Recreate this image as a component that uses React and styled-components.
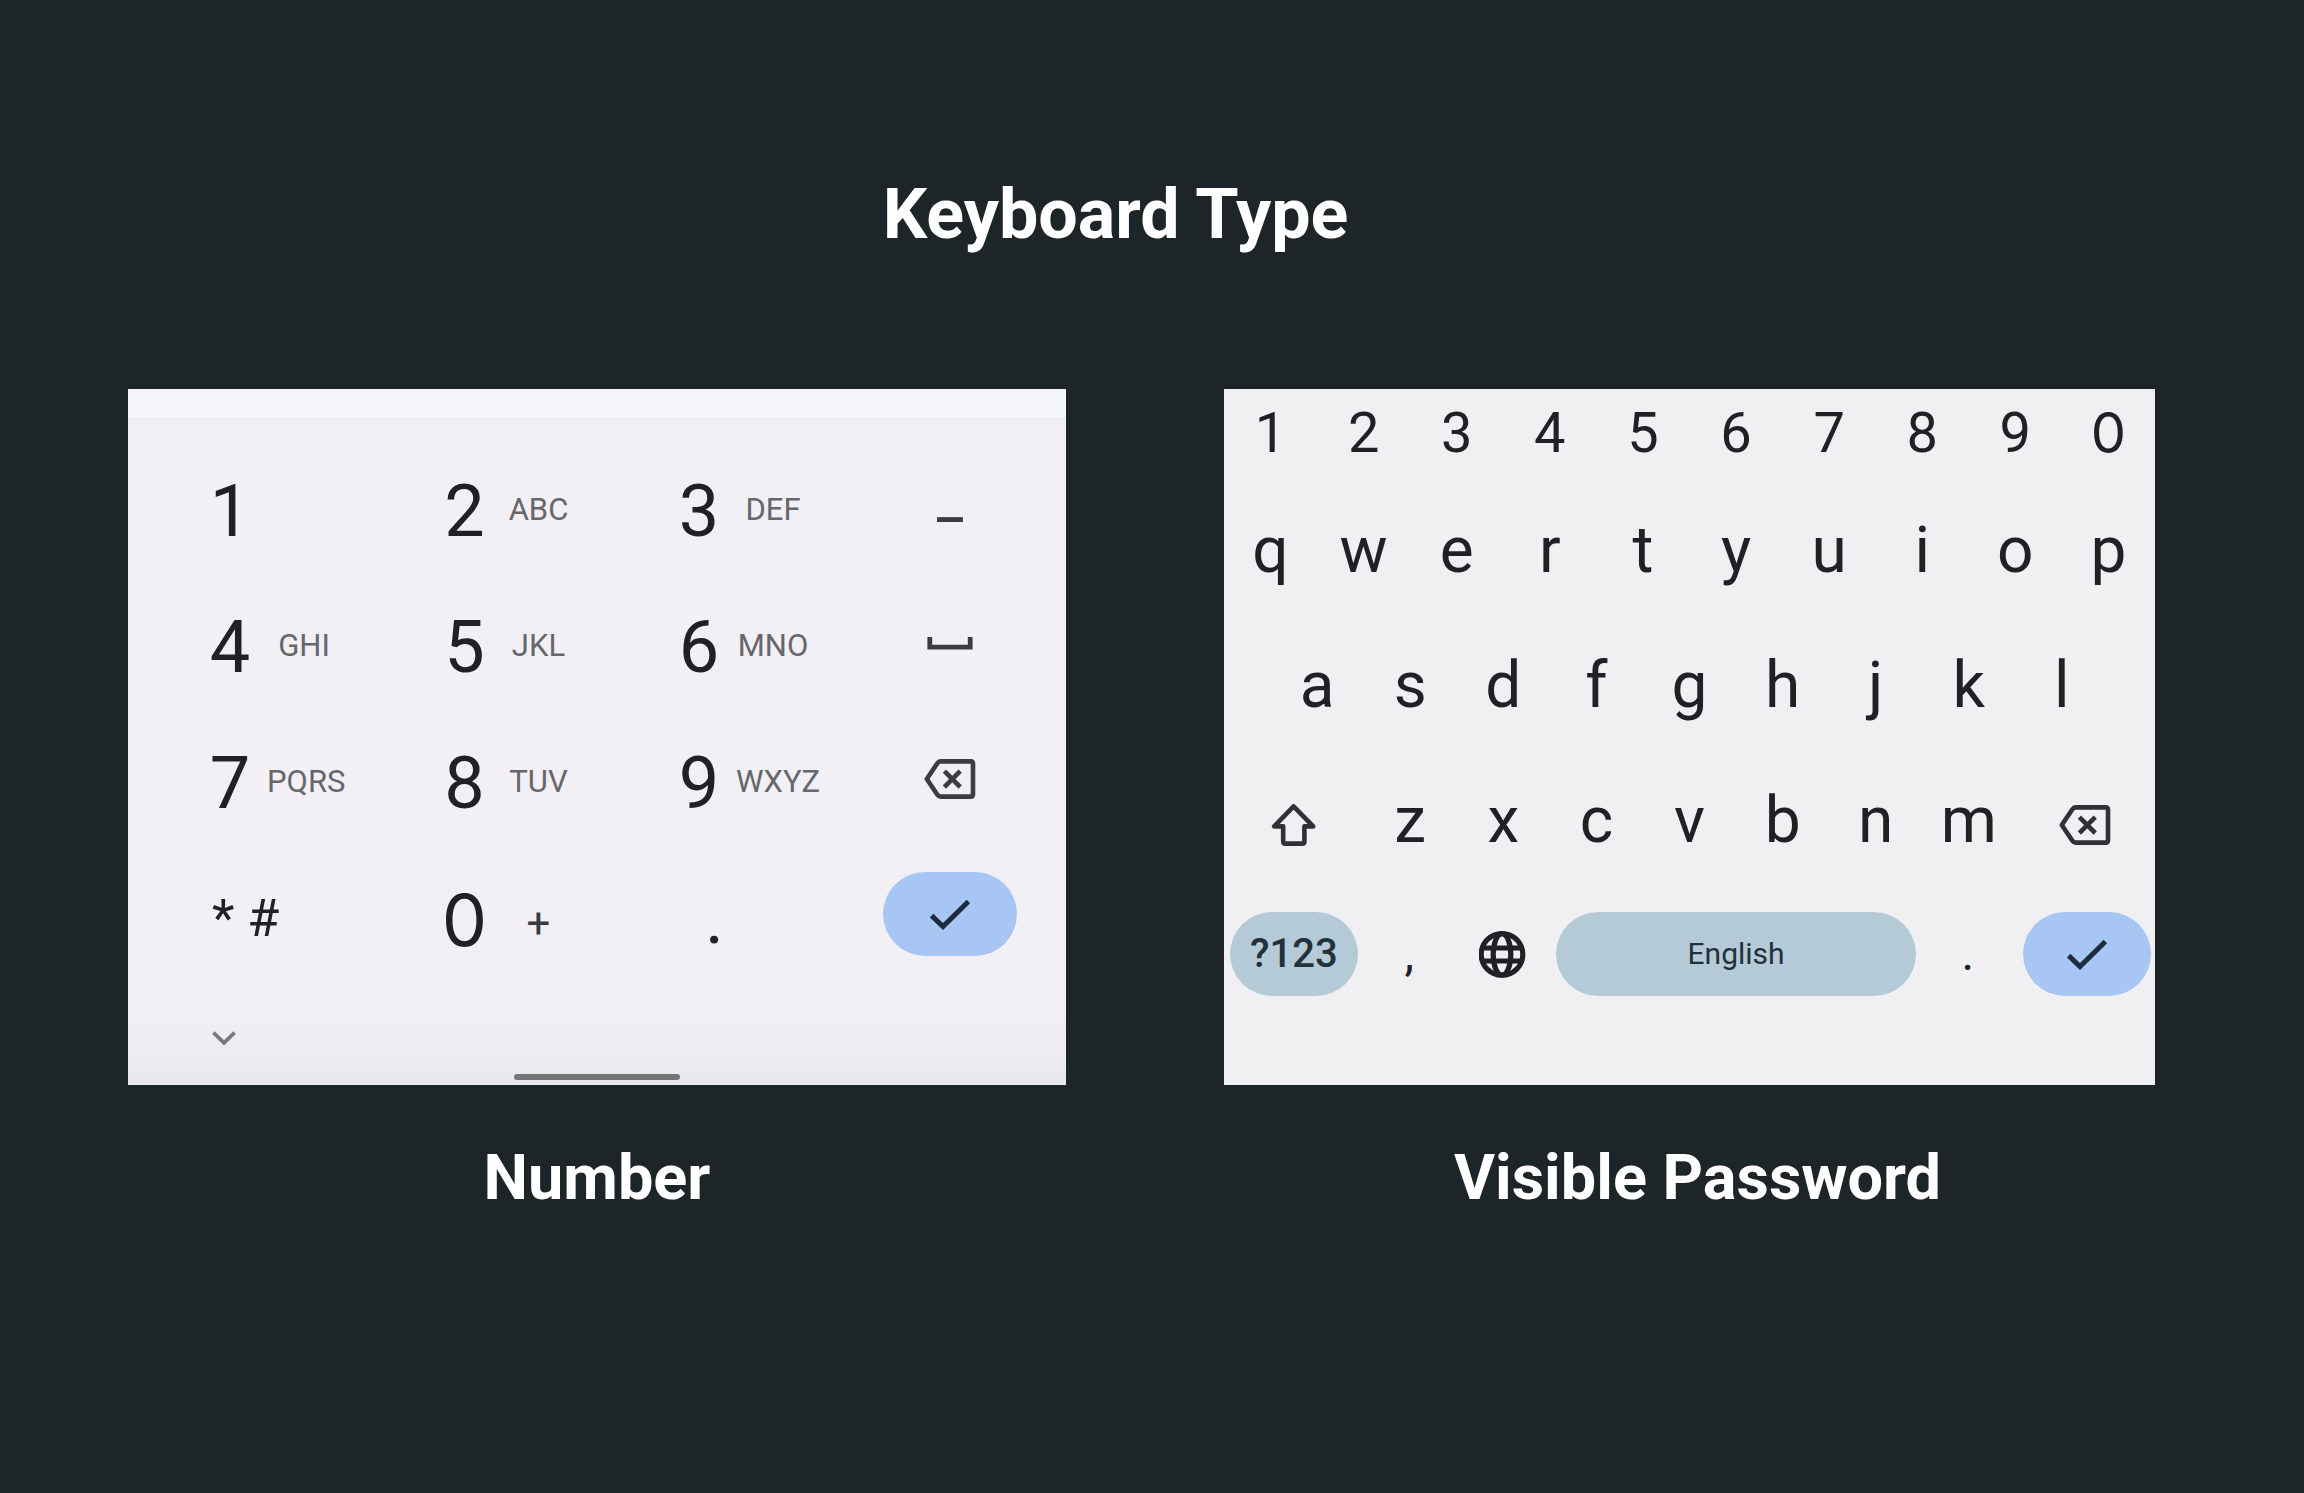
import React from "react";
import styled, { createGlobalStyle } from "styled-components";

const GlobalStyle = createGlobalStyle`
  *, *::before, *::after { box-sizing: border-box; }
  body {
    margin: 0;
    background: #1e2528;
    font-family: Roboto, "Liberation Sans", sans-serif;
  }
`;

const Page = styled.main`
  min-height: 100vh;
  padding: 174px 149px 96px 128px;
  background: #1e2528;
  color: #ffffff;
`;

const Title = styled.h1`
  margin: 0 0 135px;
  padding-right: 52px;
  font-size: 70px;
  line-height: 80px;
  font-weight: 700;
  text-align: center;
`;

const Boards = styled.div`
  display: grid;
  grid-template-columns: 938fr 931fr;
  column-gap: 158px;
  align-items: start;
`;

const Board = styled.figure`
  margin: 0;
  min-width: 0;
`;

const Caption = styled.figcaption`
  margin-top: 57px;
  padding-left: ${(p) => p.$indent || 0}px;
  font-size: 63px;
  line-height: 72px;
  font-weight: 700;
  text-align: center;
`;

const Key = styled.button`
  display: flex;
  align-items: center;
  justify-content: center;
  min-width: 0;
  margin: 0;
  padding: 0;
  border: 0;
  background: transparent;
  color: #202124;
  font-family: ${(p) => (p.$wide ? "Inter, sans-serif" : "inherit")};
  font-size: 64px;
  line-height: 1;
  font-weight: 400;
  cursor: pointer;
`;

/* Number pad */

const NumberPanel = styled.div`
  background: linear-gradient(to top, #e9e8eb 0, #f2f0f5 76px);
`;

const Strip = styled.div`
  height: 31px;
  background: #f3f5fb;
  border-bottom: 2px solid #edeef3;
`;

const NumberGrid = styled.div`
  display: grid;
  grid-template-columns: repeat(4, 1fr);
  grid-auto-rows: 136px;
  padding-top: 23px;
`;

const DigitKey = styled(Key)`
  display: grid;
  grid-template-columns: 74px 74px;
  justify-content: start;
  padding: 2px 0 0 65px;
  font-size: 72px;
  text-align: center;
`;

const Letters = styled.span`
  padding: ${(p) => (p.$symbol ? "8px 0 0" : "0 0 6px")};
  color: ${(p) => (p.$symbol ? "#3a3b3f" : "#66676b")};
  font-family: Roboto, sans-serif;
  font-size: ${(p) => (p.$symbol ? 42 : 31)}px;
`;

const SymbolKey = styled(Key)`
  justify-content: flex-start;
  padding-left: ${(p) => p.$inset}px;
  font-size: ${(p) => p.$size}px;
`;

const SideKey = styled(Key)`
  padding: 0 0 8px 2px;
  color: #3c3d41;
`;

const DashKey = styled(Key)`
  padding: 20px 0 0 2px;
  font-size: 52px;
  font-weight: 500;
  color: #3c3d41;
`;

const EnterCell = styled.div`
  display: flex;
  align-items: center;
  justify-content: center;
  padding: 0 0 10px 2px;
`;

const Pill = styled(Key)`
  height: 84px;
  border-radius: 42px;
  background: ${(p) => (p.$accent ? "#a7c6f3" : "#b5cad7")};
  color: ${(p) => (p.$accent ? "#1f2b40" : "#22313a")};
`;

const NumberEnter = styled(Pill)`
  width: 134px;
`;

const NumberFooter = styled.div`
  display: flex;
  flex-direction: column;
  height: 98px;
  padding: 44px 0 5px;
`;

const CollapseKey = styled(Key)`
  align-self: flex-start;
  margin-left: 84px;
  color: #77787b;
`;

const HomeBar = styled.div`
  align-self: center;
  width: 166px;
  height: 6px;
  margin-top: auto;
  border-radius: 3px;
  background: #757477;
`;

/* Full keyboard */

const TextPanel = styled.div`
  padding-bottom: 64px;
  background: #f0f0f3;
`;

const Row = styled.div`
  display: grid;
  grid-template-columns: ${(p) => p.$columns};
  height: 135px;
  padding: 4px ${(p) => p.$inset || "0"} 0;
`;

const DigitRow = styled(Row)`
  height: 92px;
  padding: 0 0 4px;
`;

const SmallKey = styled(Key)`
  font-size: 56px;
`;

const PunctuationKey = styled(Key)`
  padding-right: 2px;
  font-size: 48px;
`;

const IconKey = styled(Key)`
  padding-top: 8px;
  color: #303135;
`;

const BottomRow = styled(Row)`
  align-items: center;
  padding-top: 0;
`;

const BottomPill = styled(Pill)`
  margin: 0 ${(p) => (p.$accent ? "4px 0 8px" : "6px")};
  font-size: ${(p) => (p.$label ? 30 : 40)}px;
  font-weight: ${(p) => (p.$label ? 400 : 500)};
`;

const Backspace = () => (
  <svg width="52" height="40" viewBox="0 0 52 40" fill="none" stroke="currentColor" aria-hidden="true">
    <path d="M2.8 20 13.4 4.2Q14.6 2.4 16.6 2.4H46.6Q49 2.4 49 4.8V35.2Q49 37.6 46.6 37.6H16.6Q14.6 37.6 13.4 35.8Z" strokeWidth="4.6" strokeLinejoin="round" />
    <path d="M20.4 12.2 36.2 28M36.2 12.2 20.4 28" strokeWidth="4.6" />
  </svg>
);

const Check = () => (
  <svg width="42" height="34" viewBox="0 0 42 34" fill="none" stroke="currentColor" aria-hidden="true">
    <path d="M2.6 18.6 14 29.6 39.4 4.4" strokeWidth="5" />
  </svg>
);

const SpaceMark = () => (
  <svg width="46" height="14" viewBox="0 0 46 14" fill="none" stroke="currentColor" aria-hidden="true">
    <path d="M2.8 1V11.2H43.2V1" strokeWidth="4.8" />
  </svg>
);

const Chevron = () => (
  <svg width="24" height="14" viewBox="0 0 24 14" fill="none" stroke="currentColor" aria-hidden="true">
    <path d="M1.4 1.6 12 11.8 22.6 1.6" strokeWidth="3.8" />
  </svg>
);

const Shift = () => (
  <svg width="46" height="43" viewBox="0 0 46 43" fill="none" stroke="currentColor" aria-hidden="true">
    <path d="M22.6 3.4 3.2 23.4H12.2V38.4Q12.2 40.6 14.4 40.6H31.2Q33.4 40.6 33.4 38.4V23.4H42.2Z" strokeWidth="4.6" strokeLinejoin="round" />
  </svg>
);

const Globe = () => (
  <svg width="48" height="48" viewBox="0 0 48 48" fill="none" stroke="currentColor" strokeWidth="5.2" aria-hidden="true">
    <circle cx="23" cy="24.4" r="20.8" />
    <ellipse cx="23" cy="24.4" rx="8.8" ry="20.8" />
    <path d="M3.8 18H42.2M3.8 31H42.2" />
  </svg>
);

const Digit = ({ digit, letters, symbol, wide }) => (
  <DigitKey type="button" $wide={wide}>
    <span>{digit}</span>
    {letters && <Letters $symbol={symbol}>{letters}</Letters>}
  </DigitKey>
);

const NumberPad = () => (
  <NumberPanel>
    <Strip />
    <NumberGrid>
      <Digit digit="1" />
      <Digit digit="2" letters="ABC" />
      <Digit digit="3" letters="DEF" />
      <DashKey type="button">–</DashKey>
      <Digit digit="4" letters="GHI" />
      <Digit digit="5" letters="JKL" />
      <Digit digit="6" letters="MNO" />
      <SideKey type="button" aria-label="Space"><SpaceMark /></SideKey>
      <Digit digit="7" letters="PQRS" />
      <Digit digit="8" letters="TUV" />
      <Digit digit="9" letters="WXYZ" />
      <SideKey type="button" aria-label="Backspace"><Backspace /></SideKey>
      <SymbolKey type="button" $inset={84} $size={52}>* #</SymbolKey>
      <Digit digit="0" letters="+" symbol wide />
      <SymbolKey type="button" $inset={108} $size={72}>.</SymbolKey>
      <EnterCell>
        <NumberEnter type="button" $accent aria-label="Done"><Check /></NumberEnter>
      </EnterCell>
    </NumberGrid>
    <NumberFooter>
      <CollapseKey type="button" aria-label="Hide keyboard"><Chevron /></CollapseKey>
      <HomeBar />
    </NumberFooter>
  </NumberPanel>
);

const keys = (text, Component = Key) =>
  text.split("").map((char) => (
    <Component key={char} type="button" $wide={char === "0"}>{char}</Component>
  ));

const PasswordKeyboard = () => (
  <TextPanel>
    <DigitRow $columns="repeat(10, 1fr)">{keys("1234567890", SmallKey)}</DigitRow>
    <Row $columns="repeat(10, 1fr)">{keys("qwertyuiop")}</Row>
    <Row $columns="repeat(9, 1fr)" $inset="5%">{keys("asdfghjkl")}</Row>
    <Row $columns="3fr repeat(7, 2fr) 3fr">
      <IconKey type="button" aria-label="Shift"><Shift /></IconKey>
      {keys("zxcvbnm")}
      <IconKey type="button" aria-label="Backspace"><Backspace /></IconKey>
    </Row>
    <BottomRow $columns="3fr 2fr 2fr 8fr 2fr 3fr">
      <BottomPill type="button">?123</BottomPill>
      <PunctuationKey type="button">,</PunctuationKey>
      <Key type="button" aria-label="Language"><Globe /></Key>
      <BottomPill type="button" $label>English</BottomPill>
      <PunctuationKey type="button">.</PunctuationKey>
      <BottomPill type="button" $accent aria-label="Done"><Check /></BottomPill>
    </BottomRow>
  </TextPanel>
);

export default function App() {
  return (
    <>
      <GlobalStyle />
      <Page>
        <Title>Keyboard Type</Title>
        <Boards>
          <Board>
            <NumberPad />
            <Caption>Number</Caption>
          </Board>
          <Board>
            <PasswordKeyboard />
            <Caption $indent={16}>Visible Password</Caption>
          </Board>
        </Boards>
      </Page>
    </>
  );
}
